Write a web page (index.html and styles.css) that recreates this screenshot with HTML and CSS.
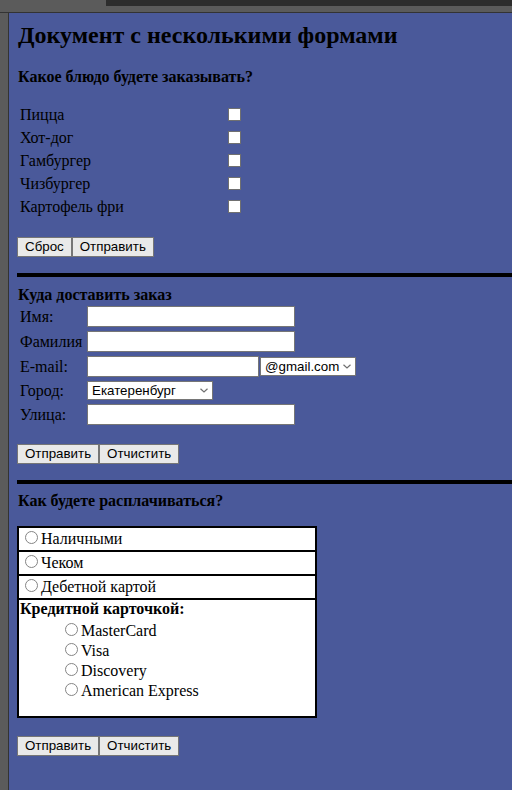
FILE: index.html
```html
<!DOCTYPE html>
<html lang="ru">
<head>
<meta charset="utf-8">
<title>Документ с несколькими формами</title>
<link rel="stylesheet" href="styles.css">
</head>
<body>
<div class="chrome"><div class="chrome-tab"></div></div>
<div class="frame">
  <div class="gutter"></div>
  <main class="page">
    <h1 class="title">Документ с несколькими формами</h1>

    <form class="form">
      <h2 class="q q-first">Какое блюдо будете заказывать?</h2>
      <div class="menu">
        <div class="menu-row"><label class="menu-label" for="f1">Пицца</label><input class="cb" type="checkbox" id="f1"></div>
        <div class="menu-row"><label class="menu-label" for="f2">Хот-дог</label><input class="cb" type="checkbox" id="f2"></div>
        <div class="menu-row"><label class="menu-label" for="f3">Гамбургер</label><input class="cb" type="checkbox" id="f3"></div>
        <div class="menu-row"><label class="menu-label" for="f4">Чизбургер</label><input class="cb" type="checkbox" id="f4"></div>
        <div class="menu-row"><label class="menu-label" for="f5">Картофель фри</label><input class="cb" type="checkbox" id="f5"></div>
      </div>
      <div class="btns btns-food"><button class="btn" type="reset">Сброс</button><button class="btn" type="button">Отправить</button></div>
    </form>

    <hr class="sep sep-1">

    <form class="form">
      <h2 class="q q-after">Куда доставить заказ</h2>
      <div class="fields">
        <div class="field"><label class="field-label">Имя:</label><input class="txt" type="text"></div>
        <div class="field"><label class="field-label">Фамилия</label><input class="txt" type="text"></div>
        <div class="field"><label class="field-label">E-mail:</label><input class="txt txt-mail" type="text"><span class="sel-wrap sel-wrap-mail"><select class="sel sel-mail"><option>@gmail.com</option></select><svg class="chev" width="8" height="5" viewBox="0 0 8 5"><path d="M0.5 0.8 L4 4 L7.5 0.8" fill="none" stroke="#6f6f6f" stroke-width="1.2"/></svg></span></div>
        <div class="field"><label class="field-label">Город:</label><span class="sel-wrap"><select class="sel sel-city"><option>Екатеренбург</option></select><svg class="chev" width="8" height="5" viewBox="0 0 8 5"><path d="M0.5 0.8 L4 4 L7.5 0.8" fill="none" stroke="#6f6f6f" stroke-width="1.2"/></svg></span></div>
        <div class="field"><label class="field-label">Улица:</label><input class="txt" type="text"></div>
      </div>
      <div class="btns btns-addr"><button class="btn" type="button">Отправить</button><button class="btn" type="reset">Отчистить</button></div>
    </form>

    <hr class="sep sep-2">

    <form class="form">
      <h2 class="q q-after">Как будете расплачиваться?</h2>
      <div class="paybox">
        <div class="pay-row"><input class="rb" type="radio" name="pay">Наличными</div>
        <div class="pay-row"><input class="rb" type="radio" name="pay">Чеком</div>
        <div class="pay-row"><input class="rb" type="radio" name="pay">Дебетной картой</div>
        <div class="credit">
          <div class="credit-title">Кредитной карточкой:</div>
          <div class="credit-list">
            <div class="credit-item"><input class="rb" type="radio" name="card">MasterCard</div>
            <div class="credit-item"><input class="rb" type="radio" name="card">Visa</div>
            <div class="credit-item"><input class="rb" type="radio" name="card">Discovery</div>
            <div class="credit-item"><input class="rb" type="radio" name="card">American Express</div>
          </div>
        </div>
      </div>
      <div class="btns btns-pay"><button class="btn" type="button">Отправить</button><button class="btn" type="reset">Отчистить</button></div>
    </form>
  </main>
</div>
</body>
</html>
```

FILE: styles.css
```css
html, body {
  margin: 0;
  padding: 0;
  height: 100%;
  overflow: hidden;
}

body {
  background: #5a5a5a;
  font-family: "Liberation Serif", "Times New Roman", serif;
  font-size: 16px;
  color: #000;
  display: flex;
  flex-direction: column;
}

.chrome {
  height: 12px;
  background: #5b5b5b;
  border-bottom: 1px solid #333;
  flex: none;
}

.chrome-tab {
  margin-left: 106px;
  height: 6px;
  background: #2d2d2d;
}

.frame {
  flex: 1;
  display: flex;
  min-height: 0;
}

.gutter {
  width: 8px;
  background: #5b5b5b;
  border-right: 1px solid #333;
  flex: none;
}

.page {
  flex: 1;
  background: #4a599a;
  padding: 8px 0 8px 8px;
}

.title {
  margin: 0;
  font-size: 24px;
  line-height: 28px;
  font-weight: bold;
  padding-left: 1px;
}

.form {
  margin: 0;
}

.q {
  margin: 0;
  font-size: 16px;
  line-height: 18px;
  font-weight: bold;
  padding-left: 1px;
}

.q-first {
  margin-top: 19px;
}

.q-after {
  margin-top: 9px;
}

.sep-2 + .form .q-after {
  margin-top: 8px;
}

.menu {
  margin-top: 17px;
}

.menu-row {
  display: flex;
  align-items: center;
  height: 23px;
}

.menu-label {
  width: 208px;
  padding-left: 3px;
}

.cb {
  -webkit-appearance: none;
  appearance: none;
  box-sizing: border-box;
  margin: 0;
  width: 13px;
  height: 13px;
  border: 1px solid #707070;
  border-radius: 0;
  background: #fff;
}

.btns {
  display: flex;
}

.btns-food {
  margin-top: 19px;
}

.btns-addr {
  margin-top: 17px;
}

.btns-pay {
  margin-top: 18px;
}

.btn {
  font-family: "Liberation Sans", Arial, sans-serif;
  font-size: 13.33px;
  height: 20px;
  padding: 0 7px;
  margin: 0;
  border: 1px solid #767676;
  border-radius: 0;
  background: #e9e9e9;
  color: #000;
  line-height: 18px;
}

.sep {
  margin: 16px 0 0;
  border: 0;
  height: 4px;
  background: #000;
}

.fields {
  margin-top: 0;
}

.field {
  display: flex;
  align-items: center;
  padding: 2px 0;
}

.field-label {
  width: 67px;
  padding-left: 3px;
  flex: none;
}

.txt {
  box-sizing: border-box;
  width: 208px;
  height: 21px;
  margin: 0;
  padding: 1px 2px;
  border: 1px solid #767676;
  border-radius: 0;
  background: #fff;
  font-family: "Liberation Sans", Arial, sans-serif;
  font-size: 13.33px;
}

.txt-mail {
  width: 172px;
}

.sel-wrap {
  position: relative;
  display: inline-flex;
}

.sel-wrap-mail {
  margin-left: 1px;
}

.sel {
  -webkit-appearance: none;
  appearance: none;
  box-sizing: border-box;
  height: 19px;
  margin: 0;
  padding: 0 0 0 4px;
  border: 1px solid #767676;
  border-radius: 0;
  background: #fff;
  color: #000;
  font-family: "Liberation Sans", Arial, sans-serif;
  font-size: 13.33px;
}

.sel-mail {
  width: 96px;
}

.sel-city {
  width: 126px;
}

.chev {
  position: absolute;
  right: 5px;
  top: 7px;
  pointer-events: none;
}

.paybox {
  margin-top: 16px;
  width: 296px;
  border: 2px solid #000;
  background: #fff;
}

.pay-row {
  height: 22px;
  line-height: 22px;
  padding: 0 1px;
  white-space: nowrap;
}

.pay-row + .pay-row,
.credit {
  border-top: 2px solid #000;
}

.rb {
  -webkit-appearance: none;
  appearance: none;
  box-sizing: border-box;
  margin: 3px 3px 0 5px;
  width: 13px;
  height: 13px;
  border: 1px solid #858585;
  border-radius: 50%;
  background: #fff;
}

.credit {
  padding: 0 1px 16px;
}

.credit-title {
  font-weight: bold;
  line-height: 18px;
}

.credit-list {
  margin-top: 2px;
  padding-left: 40px;
}

.credit-item {
  line-height: 20px;
  height: 20px;
  white-space: nowrap;
}
```
